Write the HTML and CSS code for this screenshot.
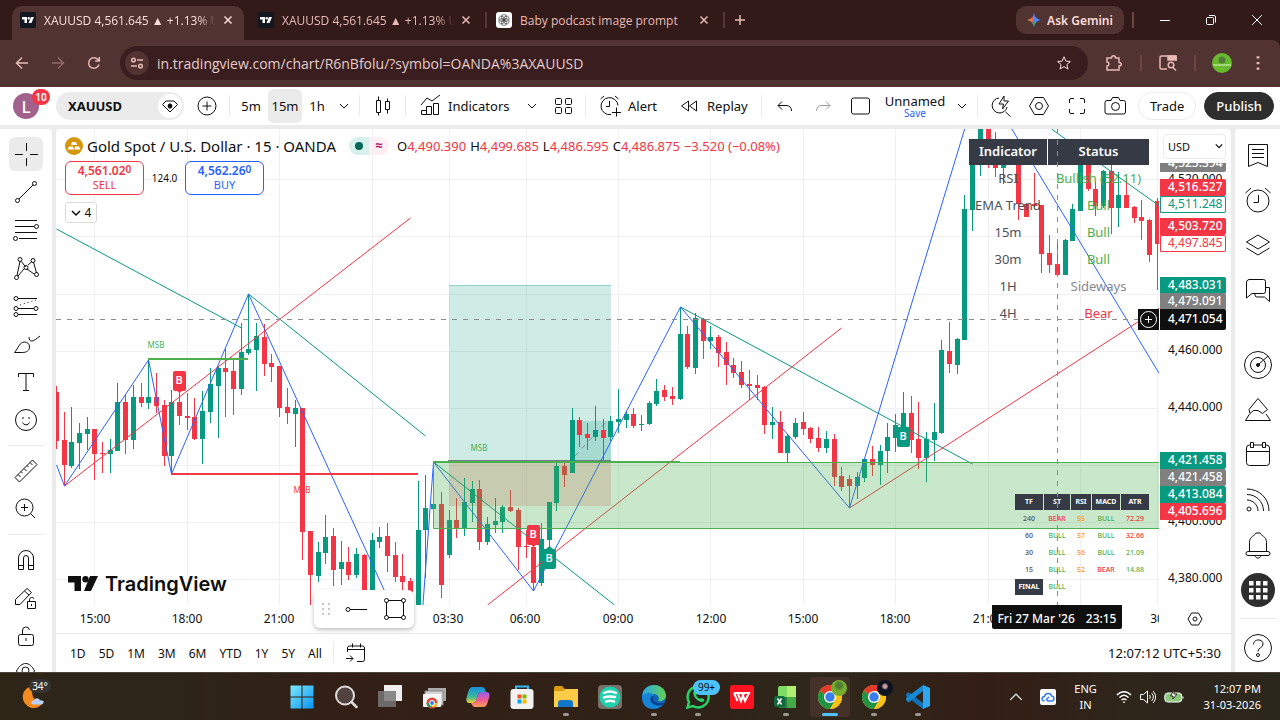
FILE: index.html
```html
<!DOCTYPE html>
<html lang="en">
<head>
    <meta charset="UTF-8">
    <meta name="viewport" content="width=device-width, initial-scale=1.0">
    <title>XAUUSD 4,561.645 ▲ +1.13% Unnamed</title>
    <link rel="stylesheet" href="styles.css">
</head>
<body>
    <!-- shared icons -->
    <svg class="defs" width="0" height="0">
        <symbol id="chevron" viewBox="0 0 10 10"><path d="M1 3l4 4 4-4"/></symbol>
        <symbol id="close" viewBox="0 0 10 10"><path d="M1.500 1.500l7 7M8.500 1.500l-7 7"/></symbol>
        <symbol id="tv" viewBox="0 0 16 16"><rect width="16" height="16" rx="2" fill="#131722"/><path d="M2 5h5v6H4.500V7.500H2zM11 5h3l-2.500 6H8.500z" fill="#fff"/><circle cx="8.800" cy="6.200" r="1.200" fill="#fff"/></symbol>
        <symbol id="chrome" viewBox="0 0 24 24">
            <circle cx="12" cy="12" r="12" fill="#fbc116"/>
            <path d="M12 12L1.600 6A12 12 0 0 1 22.400 6z" fill="#e33b2e"/>
            <path d="M12 12L1.600 6A12 12 0 0 0 12 24l5.200-9z" fill="#229342"/>
            <path d="M12 6h10.400A12 12 0 0 1 12 24l5.200-9z" fill="#fbc116"/>
            <circle cx="12" cy="12" r="6" fill="#fff"/><circle cx="12" cy="12" r="4.700" fill="#3b7ded"/>
        </symbol>
    </svg>

    <header class="browser">
        <div class="tab-strip">
            <div class="tab active">
                <svg class="favicon"><use href="#tv"/></svg>
                <span class="tab-title">XAUUSD 4,561.645 ▲ +1.13% Unnamed</span>
                <button class="tab-close" aria-label="Close tab"><svg><use href="#close"/></svg></button>
            </div>
            <div class="tab">
                <svg class="favicon"><use href="#tv"/></svg>
                <span class="tab-title">XAUUSD 4,561.645 ▲ +1.13% Unnamed</span>
                <button class="tab-close" aria-label="Close tab"><svg><use href="#close"/></svg></button>
            </div>
            <div class="tab divided">
                <svg class="favicon" viewBox="0 0 16 16"><rect width="16" height="16" rx="3" fill="#fff"/><g fill="none" stroke="#444" stroke-width=".7"><ellipse cx="8" cy="5.500" rx="2.600" ry="3"/><ellipse cx="8" cy="5.500" rx="2.600" ry="3" transform="rotate(60 8 8)"/><ellipse cx="8" cy="5.500" rx="2.600" ry="3" transform="rotate(120 8 8)"/><ellipse cx="8" cy="5.500" rx="2.600" ry="3" transform="rotate(180 8 8)"/><ellipse cx="8" cy="5.500" rx="2.600" ry="3" transform="rotate(240 8 8)"/><ellipse cx="8" cy="5.500" rx="2.600" ry="3" transform="rotate(300 8 8)"/></g></svg>
                <span class="tab-title">Baby podcast image prompt</span>
                <button class="tab-close" aria-label="Close tab"><svg><use href="#close"/></svg></button>
            </div>
            <button class="new-tab" aria-label="New tab"><svg viewBox="0 0 12 12"><path d="M6 1v10M1 6h10"/></svg></button>
            <div class="window-controls">
                <button class="gemini"><svg viewBox="0 0 14 14"><defs><linearGradient id="gem" x1="0" y1="0" x2="1" y2="0"><stop offset="0" stop-color="#f8c32d"/><stop offset=".4" stop-color="#e8575b"/><stop offset=".5" stop-color="#4b8bf5"/><stop offset="1" stop-color="#4285f4"/></linearGradient></defs><path d="M7 0c.6 4 3 6.400 7 7-4 .6-6.400 3-7 7-.6-4-3-6.400-7-7 4-.6 6.400-3 7-7z" fill="url(#gem)"/><path d="M4.500 9.400C6 10.300 6.700 12 7 14c.3-2 1-3.700 2.400-4.800z" fill="#2ea95b"/></svg>Ask Gemini</button>
                <span class="strip-sep"></span>
                <button class="win" aria-label="Minimize"><svg viewBox="0 0 12 12"><path d="M1 6.500h10"/></svg></button>
                <button class="win" aria-label="Restore"><svg viewBox="0 0 12 12"><rect x="1.500" y="3.500" width="7" height="7" rx="1"/><path d="M4 1.500h5a1.500 1.500 0 0 1 1.500 1.500v5.500"/></svg></button>
                <button class="win" aria-label="Close"><svg viewBox="0 0 12 12"><path d="M1 1l10 10M11 1L1 11"/></svg></button>
            </div>
        </div>
        <div class="address-row">
            <button class="nav" aria-label="Back"><svg viewBox="0 0 16 16"><path d="M14 8H3M8 2.500L2.500 8 8 13.500"/></svg></button>
            <button class="nav dim" aria-label="Forward"><svg viewBox="0 0 16 16"><path d="M2 8h11M8 2.500L13.500 8 8 13.500"/></svg></button>
            <button class="nav" aria-label="Reload"><svg viewBox="0 0 16 16"><path d="M13 9.500A5.300 5.300 0 1 1 12.300 5M13.300 2v4H9.200"/></svg></button>
            <div class="omnibox">
                <button class="site-info" aria-label="Site information"><svg viewBox="0 0 14 14"><circle cx="3.500" cy="4" r="1.800"/><path d="M7 4h6M1 10h6"/><circle cx="10.500" cy="10" r="1.800"/></svg></button>
                <input class="url" type="text" aria-label="Address" value="in.tradingview.com/chart/R6nBfolu/?symbol=OANDA%3AXAUUSD">
                <button class="star" aria-label="Bookmark"><svg viewBox="0 0 16 16"><path d="M8 1.800l1.800 4.300 4.600.4-3.500 3 1.100 4.600L8 11.600l-4 2.500 1.100-4.600-3.500-3 4.600-.4z"/></svg></button>
            </div>
            <div class="extensions">
                <button class="nav" aria-label="Extensions"><svg viewBox="0 0 18 18"><path d="M2 4h4.500c0-3 4-3 4 0H14v4.500c3 0 3 3.500 0 3.500v4H2v-4c2.500 0 2.500-4 0-4z"/></svg></button>
                <span class="strip-sep"></span>
                <button class="nav" aria-label="Search page"><svg viewBox="0 0 18 18"><path d="M8 15H2.500A1.500 1.500 0 0 1 1 13.500v-10A1.500 1.500 0 0 1 2.500 2h13A1.500 1.500 0 0 1 17 3.500V7"/><path d="M9 2h8v4H9z" fill="#e8b9b5"/><circle cx="12" cy="11" r="2.800"/><path d="M14 13.500l3 3"/></svg></button>
                <span class="strip-sep"></span>
                <button class="nav" aria-label="Profile"><svg class="profile" viewBox="0 0 20 20"><circle cx="10" cy="10" r="10" fill="#69b92d"/><circle cx="10" cy="7" r="3.500" fill="#527c3b"/><path d="M1 11h18v2H1z" fill="#a6d77c"/></svg></button>
                <button class="nav" aria-label="Menu"><svg viewBox="0 0 16 16"><path d="M8 2v2M8 7v2M8 12v2" stroke-width="2.500"/></svg></button>
            </div>
        </div>
    </header>

    <main class="app">
        <nav class="top-bar">
            <div class="account"><span class="avatar">L</span><span class="badge">10</span></div>
            <div class="symbol-pill">
                <button class="symbol">XAUUSD</button>
                <button class="gem" aria-label="Symbol details"><svg viewBox="0 0 18 18"><path d="M5 4h8l3.500 3.500L9 15 1.500 7.500z"/><path d="M9 6v6M6.500 9h5"/><path d="M7.500 7.500h3v3h-3z" fill="#0f0f0f"/></svg></button>
            </div>
            <button class="tool" aria-label="Compare"><svg viewBox="0 0 28 28"><circle cx="14" cy="14" r="9"/><path d="M14 9.500v9M9.500 14h9"/></svg></button>
            <span class="sep"></span>
            <button class="interval">5m</button>
            <button class="interval selected">15m</button>
            <button class="interval short">1h</button>
            <button class="drop" aria-label="More intervals"><svg><use href="#chevron"/></svg></button>
            <span class="sep"></span>
            <button class="tool" aria-label="Candles"><svg viewBox="0 0 28 28"><path d="M7.500 8.500h4v12h-4zM9.500 4.500v4M9.500 20.500v3M16.500 9.500h4v8h-4zM18.500 6.500v3M18.500 17.500v4"/></svg></button>
            <span class="sep"></span>
            <button class="tool labelled indicators"><svg viewBox="0 0 28 28"><path d="M5 13l6-7 5 3 8-6M5.500 18.500h5v4h-5zM10.500 14.500h5v8h-5zM17.500 11.500h5v11h-5z"/></svg>Indicators</button>
            <button class="drop" aria-label="Favourite indicators"><svg><use href="#chevron"/></svg></button>
            <button class="tool" aria-label="Templates"><svg viewBox="0 0 28 28"><rect x="6.500" y="6.500" width="6" height="6" rx="1"/><rect x="16.500" y="6.500" width="6" height="6" rx="1"/><rect x="6.500" y="15.500" width="6" height="6" rx="1"/><rect x="16.500" y="15.500" width="6" height="6" rx="1"/></svg></button>
            <span class="sep"></span>
            <button class="tool labelled alert"><svg viewBox="0 0 28 28"><path d="M22 13.500A8.500 8.500 0 1 0 15 22.500M13.500 9v5.500H10M4.500 7L8 4M19 4l3.500 3M20.500 15.500v9M16 20.500h9"/></svg>Alert</button>
            <button class="tool labelled replay"><svg viewBox="0 0 28 28"><path d="M13.500 9v10L6.500 14zM21.500 9v10L14.500 14z"/></svg>Replay</button>
            <span class="sep"></span>
            <button class="tool" aria-label="Undo"><svg viewBox="0 0 28 28"><path d="M11 9.500l-4 4 4 4M7 13.500h8c3.500 0 5.500 2 5.500 5.500"/></svg></button>
            <button class="tool faded" aria-label="Redo"><svg viewBox="0 0 28 28"><path d="M17 9.500l4 4-4 4M21 13.500h-8c-3.500 0-5.500 2-5.500 5.500"/></svg></button>
            <button class="tool" aria-label="Layout"><svg viewBox="0 0 28 28"><rect x="4.500" y="6" width="18" height="16" rx="2"/></svg></button>
            <button class="layout-name"><span>Unnamed</span><small>Save</small></button>
            <button class="drop" aria-label="Manage layouts"><svg><use href="#chevron"/></svg></button>
            <span class="sep"></span>
            <button class="tool" aria-label="Quick search"><svg viewBox="0 0 28 28"><path d="M12 6a7.500 7.500 0 1 0 8 9M18.500 20l5 4.500M17 4l-5 8h4.500l-1 5 6-8H17z"/></svg></button>
            <button class="tool" aria-label="Settings"><svg viewBox="0 0 28 28"><path d="M9.500 5.500h9l5 8.500-5 8.500h-9l-5-8.500z"/><circle cx="14" cy="14" r="3.500"/></svg></button>
            <button class="tool" aria-label="Fullscreen"><svg viewBox="0 0 28 28"><path d="M6.500 11V8a1.500 1.500 0 0 1 1.500-1.500h3M17 6.500h3A1.500 1.500 0 0 1 21.500 8v3M21.500 17v3a1.500 1.500 0 0 1-1.500 1.500h-3M11 21.500H8A1.500 1.500 0 0 1 6.500 20v-3"/></svg></button>
            <button class="tool" aria-label="Snapshot"><svg viewBox="0 0 28 28"><path d="M6 8.500h4l1.500-3h6l1.500 3h3.500a2 2 0 0 1 2 2V20a2 2 0 0 1-2 2H6a2 2 0 0 1-2-2v-9.500a2 2 0 0 1 2-2z"/><circle cx="14.500" cy="14.500" r="4"/></svg></button>
            <div class="actions">
                <button class="trade">Trade</button>
                <button class="publish">Publish</button>
            </div>
        </nav>

        <div class="workspace">
            <aside class="draw-bar">
                <button class="draw selected" aria-label="Cross"><svg viewBox="0 0 28 28"><path d="M14.500 3v8M14.500 18v8M3 14.500h8M18 14.500h8"/></svg></button>
                <button class="draw" aria-label="Trend line"><svg viewBox="0 0 28 28"><path d="M7 21L21 7"/><circle cx="5.500" cy="22.500" r="2"/><circle cx="22.500" cy="5.500" r="2"/></svg></button>
                <button class="draw" aria-label="Fib retracement"><svg viewBox="0 0 28 28"><path d="M3 4.500h22M3 10.500h19M3 16.500h22M7 22.500h18"/><circle cx="24.500" cy="10.500" r="2"/><circle cx="3.500" cy="22.500" r="2"/></svg></button>
                <button class="draw" aria-label="Pattern"><svg viewBox="0 0 28 28"><path d="M5 21.500L8 7.500M9.500 7.500l4 5.500M16 11l4-3.500M21.500 8l3 11M22 20l-7-5M12 15l-6 7"/><circle cx="4.500" cy="23.500" r="2"/><circle cx="8" cy="5.500" r="2"/><circle cx="14" cy="13.500" r="2"/><circle cx="21" cy="6.500" r="2"/><circle cx="24.500" cy="20.500" r="2"/></svg></button>
                <button class="draw" aria-label="Forecast"><svg viewBox="0 0 28 28"><path d="M6 6.500h19M6 16.500h16M6 22.500h19"/><path d="M8 13l16-5" stroke-dasharray="1 3"/><circle cx="4" cy="6.500" r="2"/><circle cx="4" cy="16.500" r="2"/><circle cx="24" cy="16.500" r="2"/><circle cx="4" cy="22.500" r="2"/></svg></button>
                <button class="draw" aria-label="Brush"><svg viewBox="0 0 28 28"><path d="M2.500 22.500h8c4 0 7-2 7-5.500s-2.500-5-5-5c-5 0-6 6-10 10.500zM17 7c0 3 1 4 3 4s4-2 8-5"/></svg></button>
                <button class="draw" aria-label="Text"><svg viewBox="0 0 28 28"><path d="M6.500 9V5.500h15V9M14 5.500v17M11 22.500h6"/></svg></button>
                <button class="draw" aria-label="Emoji"><svg viewBox="0 0 28 28"><circle cx="14" cy="14" r="10.500"/><path d="M11 11v2M17 11v2M10.500 16.500c1.500 3 5.500 3 7 0"/></svg></button>
                <hr>
                <button class="draw" aria-label="Measure"><svg viewBox="0 0 28 28"><path d="M3 20.500L20.500 3l4.500 4.500L7.500 25zM6 17.500l2.500 2.500M9 14.500l1.500 1.500M12 11.500l2.500 2.500M15 8.500l1.500 1.500M18 5.500L20.500 8"/></svg></button>
                <button class="draw" aria-label="Zoom in"><svg viewBox="0 0 28 28"><circle cx="12.500" cy="12.500" r="8.500"/><path d="M12.500 9v7M9 12.500h7M18.500 18.500l4.500 4.500"/></svg></button>
                <hr>
                <button class="draw" aria-label="Magnet"><svg viewBox="0 0 28 28"><path d="M6.500 23.500V12a7.500 7.500 0 0 1 15 0v11.500h-5V12a2.500 2.500 0 0 0-5 0v11.500zM6.500 19.500h5M16.500 19.500h5"/></svg></button>
                <button class="draw" aria-label="Keep drawing"><svg viewBox="0 0 28 28"><path d="M3.500 20.500v-5L15 4.500l4.500 4L8 20.500zM12.500 7l4.500 4M15.500 17.500h8v7h-8zM17.500 17.500v-2a2.500 2.500 0 0 1 4.500-1M19.500 20v2"/></svg></button>
                <button class="draw" aria-label="Lock"><svg viewBox="0 0 28 28"><rect x="6.500" y="12.500" width="15" height="11" rx="2"/><path d="M10.500 12.500V9A3.500 3.500 0 0 1 17.500 8M14 16v3"/></svg></button>
                <button class="draw" aria-label="Hide drawings"><svg viewBox="0 0 28 28"><path d="M4.500 11c5-10 13.500-10 18 0-4.500 8-13.500 8-18 0z"/><circle cx="13.500" cy="10.500" r="3.500"/></svg></button>
            </aside>

            <section class="chart-panel">
                <div class="chart-grid">
                    <div class="canvas">
                        <svg class="plot" id="plot"></svg>
                        <div class="legend">
                            <div class="legend-line">
                                <svg class="gold" viewBox="0 0 18 18"><circle cx="9" cy="9" r="9" fill="#d6960a"/><path d="M7 5h4l1 3H6zM4 9.500h4l1 3H2.500zM10 9.500h4l1.500 3H9.500z" fill="#fff"/></svg>
                                <h1>Gold Spot / U.S. Dollar · 15 · OANDA</h1>
                                <span class="market"><i class="open"></i><b>≈</b></span>
                                <p class="ohlc"><span>O<em>4,490.390</em></span><span>H<em>4,499.685</em></span><span>L<em>4,486.595</em></span><span>C<em>4,486.875</em></span><em>−3.520 (−0.08%)</em></p>
                            </div>
                            <div class="quotes">
                                <button class="quote sell"><b>4,561.02<sup>0</sup></b>SELL</button>
                                <span class="spread">124.0</span>
                                <button class="quote buy"><b>4,562.26<sup>0</sup></b>BUY</button>
                            </div>
                            <button class="collapse"><svg><use href="#chevron"/></svg>4</button>
                        </div>
                        <div class="brand"><svg viewBox="0 0 30 16"><path d="M0 0h13v15H6.500V6.500H0zM22 0h8l-7 15h-7z"/><circle cx="17.500" cy="3.200" r="3.200"/></svg>TradingView</div>
                        <table class="status">
                            <thead><tr><th>Indicator</th><th>Status</th></tr></thead>
                            <tbody>
                                <tr><td>RSI</td><td class="up">Bullish (52.11)</td></tr>
                                <tr><td>EMA Trend</td><td class="up">Bull</td></tr>
                                <tr><td>15m</td><td class="up">Bull</td></tr>
                                <tr><td>30m</td><td class="up">Bull</td></tr>
                                <tr><td>1H</td><td class="flat">Sideways</td></tr>
                                <tr><td>4H</td><td class="down">Bear</td></tr>
                            </tbody>
                        </table>
                        <table class="matrix">
                            <thead><tr><th>TF</th><th>ST</th><th>RSI</th><th>MACD</th><th>ATR</th></tr></thead>
                            <tbody>
                                <tr><td>240</td><td class="down">BEAR</td><td class="mid">55</td><td class="up">BULL</td><td class="down">72.29</td></tr>
                                <tr><td>60</td><td class="up">BULL</td><td class="mid">57</td><td class="up">BULL</td><td class="down">32.66</td></tr>
                                <tr><td>30</td><td class="up">BULL</td><td class="mid">56</td><td class="up">BULL</td><td class="up">21.09</td></tr>
                                <tr><td>15</td><td class="up">BULL</td><td class="mid">52</td><td class="down">BEAR</td><td class="up">14.88</td></tr>
                                <tr><th>FINAL</th><td class="up">BULL</td><td></td><td></td><td></td></tr>
                            </tbody>
                        </table>
                        <svg class="plot cross" id="cross"></svg>
                        <button class="add-order" aria-label="Add order"><svg viewBox="0 0 21 21"><circle cx="10.500" cy="10.500" r="8"/><path d="M10.500 7v7M7 10.500h7"/></svg></button>
                    </div>
                    <div class="price-axis">
                        <select class="currency" aria-label="Currency"><option>USD</option></select>
                        <svg class="currency-arrow"><use href="#chevron"/></svg>
                        <div class="prices" id="prices"></div>
                    </div>
                    <div class="time-axis" id="times"></div>
                    <div class="axis-corner"><button aria-label="Axis settings"><svg viewBox="0 0 16 16"><path d="M4.500 2h7L15 8l-3.500 6h-7L1 8z"/><circle cx="8" cy="8" r="2"/></svg></button></div>
                    <div class="cross-time"><span>Fri 27 Mar '26</span><span>23:15</span></div>
                    <div class="favorites">
                        <svg class="grip" viewBox="0 0 10 14"><path d="M1 1h2v2H1zM7 1h2v2H7zM1 6h2v2H1zM7 6h2v2H7zM1 11h2v2H1zM7 11h2v2H7z"/></svg>
                        <button aria-label="Horizontal ray"><svg viewBox="0 0 28 28"><circle cx="6" cy="14.500" r="2"/><path d="M8 14.500h17"/></svg></button>
                        <button aria-label="Rectangle"><svg viewBox="0 0 28 28"><path d="M7 5.500h14M7 22.500h14M5.500 7v14M22.500 7v14"/><circle cx="5.500" cy="5.500" r="2"/><circle cx="22.500" cy="5.500" r="2"/><circle cx="5.500" cy="22.500" r="2"/><circle cx="22.500" cy="22.500" r="2"/></svg></button>
                    </div>
                </div>
                <footer class="range-bar">
                    <button>1D</button><button>5D</button><button>1M</button><button>3M</button><button>6M</button><button>YTD</button><button>1Y</button><button>5Y</button><button>All</button>
                    <span class="sep"></span>
                    <button class="goto" aria-label="Go to date"><svg viewBox="0 0 28 28"><path d="M5.500 13V9a2 2 0 0 1 2-2h13a2 2 0 0 1 2 2v11.500a2 2 0 0 1-2 2H15M5.500 10.500h17M10.500 4.500v4M18.500 4.500v4M4 19.500h7M8 16.500l3 3-3 3"/></svg></button>
                    <button class="clock">12:07:12 UTC+5:30</button>
                </footer>
            </section>

            <aside class="side-bar">
                <button aria-label="Watchlist"><svg viewBox="0 0 28 28"><path d="M4.500 3.500h19v22L14 21.500l-9.500 4zM8 8.500h12M8 12.500h12M8 16.500h12"/></svg></button>
                <button aria-label="Alerts"><svg viewBox="0 0 28 28"><circle cx="14" cy="15" r="11"/><path d="M14.500 9v7.500h-5M1.500 7L7 2M21 2l5.500 5"/></svg></button>
                <button aria-label="Object tree"><svg viewBox="0 0 28 28"><path d="M14 4l11.500 7L14 18 2.500 11zM2.500 17L14 24l11.500-7"/></svg></button>
                <button aria-label="Chats"><svg viewBox="0 0 28 28"><path d="M4.500 3.500h15a2 2 0 0 1 2 2v10a2 2 0 0 1-2 2H8l-5.500 4.500v-16a2 2 0 0 1 2-2zM21.500 11.500h4v14l-5-4.500H13a2 2 0 0 1-2-2v-1.500"/></svg></button>
                <button class="lower" aria-label="Screeners"><svg viewBox="0 0 28 28"><circle cx="14" cy="14" r="13.500"/><circle cx="14" cy="14" r="7.500"/><circle cx="14" cy="14" r="1.500" fill="#131722"/><path d="M14 14L24 5"/></svg></button>
                <button aria-label="Pine editor"><svg viewBox="0 0 28 28"><path d="M14 2.500l9.500 11-5 4-4.500-3H9.500l-3.500 3-1-4zM5.500 18l-4 6.500h25L22 18"/></svg></button>
                <button aria-label="Calendar"><svg viewBox="0 0 28 28"><rect x="2.500" y="4" width="23" height="20.500" rx="3"/><path d="M2.500 10.500h23"/><path d="M6.500 1.500h3v5h-3zM18.500 1.500h3v5h-3z" fill="#fff"/></svg></button>
                <button aria-label="News"><svg viewBox="0 0 28 28"><circle cx="5" cy="23" r="2"/><path d="M3 14c6 0 11 5 11 11M3 8.500c9 0 16.500 7 16.500 16.500M3 3c12 0 22 9 22 22"/></svg></button>
                <button aria-label="Notifications"><svg viewBox="0 0 28 28"><path d="M5.500 20V11.500C5.500 5 11 5 12 2h4c1 3 6.500 3 6.500 9.500V20M4 20.500h20a2 2 0 0 1 0 4H4a2 2 0 0 1 0-4zM11 24.500c1 3.500 5 3.500 6 0"/></svg></button>
                <button class="products" aria-label="Products"><svg viewBox="0 0 34 34"><circle cx="17" cy="17" r="17" fill="#2e2e2e"/><path d="M8 8h4.500v4.500H8zM15 8h4.500v4.500H15zM22 8h4.500v4.500H22zM8 15h4.500v4.500H8zM15 15h4.500v4.500H15zM22 15h4.500v4.500H22zM8 22h4.500v4.500H8zM15 22h4.500v4.500H15zM22 22h4.500v4.500H22z" fill="#fff"/></svg></button>
                <hr>
                <button aria-label="Help"><svg viewBox="0 0 28 28"><circle cx="14" cy="14" r="13.500"/><path d="M9.500 10.500c0-6 9.500-6 9.500-.5 0 4-5 3.500-5 7.500"/><circle cx="14" cy="21" r="1.500"/></svg></button>
            </aside>
        </div>
    </main>

    <footer class="taskbar">
        <button class="weather"><svg viewBox="0 0 24 24"><path d="M12 1a11 11 0 1 0 10 15C13 18 7 11 12 1z" fill="#f58b1f"/><path d="M12 15.500c1-3 5-3 6 0 4-1 5 4 1 4h-7c-4 0-4-4 0-4z" fill="#b9d0f5"/></svg><span>34°</span></button>
        <div class="apps">
            <button aria-label="Start"><svg viewBox="0 0 24 24"><defs><linearGradient id="win" x1="0" y1="0" x2="1" y2="1"><stop offset="0" stop-color="#7be8fb"/><stop offset="1" stop-color="#0a95f5"/></linearGradient></defs><path d="M.5.500h11v11H.5zM12.500.5h11v11h-11zM.5 12.500h11v11H.5zM12.500 12.500h11v11h-11z" fill="url(#win)"/></svg></button>
            <button aria-label="Search"><svg viewBox="0 0 24 24"><circle cx="11" cy="10.500" r="9" fill="#534340" stroke="#ddd" stroke-width="2"/><path d="M17.500 17l5 5" stroke="#ddd" stroke-width="2.500" stroke-linecap="round"/></svg></button>
            <button aria-label="Task view"><svg viewBox="0 0 24 24"><path d="M6 0h18v16H6z" fill="#eee"/><path d="M0 6h18v16H0z" fill="#777" opacity=".85"/></svg></button>
            <button aria-label="Snipping"><svg viewBox="0 0 24 24"><path d="M6 3h18v13H6z" fill="#aaa"/><path d="M3 6h18v14H3z" fill="#d5d5d5" stroke="#888"/><path d="M1 9h18v13H1z" fill="#f5f5f5"/><circle cx="10" cy="18" r="5.500" fill="#e2473b"/><path d="M10 18H4.500a5 5 0 0 0 2 4h3z" fill="#2b9f4b"/><path d="M10 18h5.500a5 5 0 0 1-2 4H10z" fill="#fbc116"/><circle cx="10" cy="18" r="2.500" fill="#3b7ded" stroke="#fff"/></svg></button>
            <button aria-label="Copilot"><svg viewBox="0 0 24 24"><defs><linearGradient id="cop" x1="0" y1="0" x2="0" y2="1"><stop offset="0" stop-color="#198fe0"/><stop offset=".6" stop-color="#36b89b"/><stop offset="1" stop-color="#f4cd33"/></linearGradient><linearGradient id="cop2" x1="0" y1="0" x2="0" y2="1"><stop offset="0" stop-color="#8f62ef"/><stop offset=".5" stop-color="#ef5899"/><stop offset="1" stop-color="#ff9f52"/></linearGradient></defs><path d="M7 2h9c3 0 3 3 4 5h-5c-2 0-3 2-4 6s-2 5-5 5H3c-3 0-3-4-2-7C3 5 3 2 7 2z" fill="url(#cop)"/><path d="M17 22H9c-2 0-3-2-4-4 4 0 5-1 6-5s2-6 5-6h4c4 0 4 3 3 6-2 6-2 9-6 9z" fill="url(#cop2)"/></svg></button>
            <button aria-label="Store"><svg viewBox="0 0 24 24"><path d="M6 6V1.500h12V6" fill="none" stroke="#36b7ef" stroke-width="2"/><rect x=".5" y="4" width="23" height="20" rx="3" fill="#f2f2f2"/><path d="M7.500 9.500h4v4h-4z" fill="#f25022"/><path d="M12.500 9.500h4v4h-4z" fill="#7fba00"/><path d="M7.500 14.500h4v4h-4z" fill="#00a4ef"/><path d="M12.500 14.500h4v4h-4z" fill="#ffb900"/></svg></button>
            <button class="running" aria-label="Files"><svg viewBox="0 0 24 24"><path d="M0 3a2 2 0 0 1 2-2h6l3 3h11a2 2 0 0 1 2 2v5H0z" fill="#d99a0f"/><path d="M0 6h9l3-2h12v18H0z" fill="#fccc48"/><path d="M4 22v-4a3 3 0 0 1 3-3h9a3 3 0 0 1 3 3v4z" fill="#1377c9"/></svg></button>
            <button aria-label="Music"><svg viewBox="0 0 24 24"><rect width="24" height="24" rx="4" fill="#77716a"/><circle cx="12" cy="12" r="10.500" fill="#1fcfae"/><path d="M6 8c4-2 8-2 12 0M6 12.500c4-1.500 7-1.500 11-.5M8 16.500c3-1 5-1 8 0" stroke="#fff" stroke-width="2.500" fill="none" stroke-linecap="round"/></svg></button>
            <button class="running" aria-label="Edge"><svg viewBox="0 0 24 24"><defs><linearGradient id="edge" x1="0" y1="0" x2="1" y2="0"><stop offset="0" stop-color="#2aa6e4"/><stop offset="1" stop-color="#63d353"/></linearGradient></defs><circle cx="12" cy="12" r="12" fill="#0f62b5"/><path d="M.5 9C3-3 22-3 24 10c0 5-4 7-8 6 2-3 0-7-5-7-4 0-7 1-10.500 4z" fill="url(#edge)"/><path d="M0 12c2-5 11-5 12-1-5 2-3 9 9 8-4 7-21 8-21-7z" fill="#1583d6"/><path d="M12 11c-3 3 0 9 10 7l-1 1.500c-6 3-15-1-12-8z" fill="#07408a"/></svg></button>
            <button class="running" aria-label="WhatsApp"><svg viewBox="0 0 24 24"><path d="M1.500 22.500L3 17a10.500 10.500 0 1 1 4 4z" fill="#2c221a" stroke="#25d366" stroke-width="2.500"/><path d="M8 6c-3 3 3 11 8 11 2 0 3-2 2-3l-3-1-1 1c-2-1-3-2-4-4l1-1-1-3z" fill="#25d366"/></svg><span class="count">99+</span></button>
            <button aria-label="WPS"><svg viewBox="0 0 24 24"><rect width="24" height="24" rx="3" fill="#ff1320"/><path d="M4 8h8l3 8 4-8h-5l-3 8-3.500-8M4 8l3.500 8" fill="none" stroke="#fff" stroke-width="2"/></svg></button>
            <button class="running" aria-label="Excel"><svg viewBox="0 0 24 24"><path d="M4 3a2 2 0 0 1 2-2h8v11H4z" fill="#7edb65"/><path d="M13 1h9v11h-9z" fill="#b0ed72"/><path d="M4 12h18v11H6a2 2 0 0 1-2-2z" fill="#237f3d"/><path d="M13 12h9v11h-9z" fill="#45a947"/><rect y="11" width="11" height="11" rx="2" fill="#10693a"/><path d="M3.500 13.500l4 6M7.500 13.500l-4 6" stroke="#fff" stroke-width="1.500"/></svg></button>
            <button class="focused" aria-label="Chrome"><svg><use href="#chrome"/></svg><i class="who green"></i></button>
            <button class="running" aria-label="Chrome profile"><svg><use href="#chrome"/></svg><i class="who"></i></button>
            <button class="running" aria-label="Code"><svg viewBox="0 0 24 24"><path d="M0 9l2.500-2L17 18v6L0 11z" fill="#1071b8"/><path d="M0 15l2.500 2.500L17 6V0L0 13z" fill="#168bd5"/><path d="M17 0l7 3v18l-7 3z" fill="#2da7ef"/></svg></button>
        </div>
        <div class="tray">
            <button aria-label="Hidden icons"><svg viewBox="0 0 14 14"><path d="M2 9.500l5-5 5 5"/></svg></button>
            <button aria-label="Cloud"><svg viewBox="0 0 16 16"><rect width="16" height="16" rx="2" fill="#fff" stroke="none"/><path d="M4.500 12C1 12 1.500 7.500 4.500 7.500 5 3.500 11 3.500 11.500 7c3.500 0 3 5 0 5H8L6.500 10.500 9 8" stroke="#367ded" stroke-width="1.500"/></svg></button>
            <button class="lang">ENG<br>IN</button>
            <button aria-label="Network"><svg viewBox="0 0 16 16"><path d="M1 6c4-4.500 10-4.500 14 0M3.500 8.500c3-3 6-3 9 0M5.500 11c2-1.500 3-1.500 5 0M8 12.500v1.500" stroke-width="1.500"/></svg></button>
            <button aria-label="Volume"><svg viewBox="0 0 16 16"><path d="M.5 5.500h3l4-3.500v12l-4-3.500h-3zM9.500 6c1 1.500 1 3 0 4M11.500 4c2.500 2.500 2.500 5.500 0 8M13 2c3.500 4 3.500 8 0 12"/></svg></button>
            <button class="battery" aria-label="Battery"><svg viewBox="0 0 20 14"><rect x=".8" y="3" width="17" height="9" rx="3" fill="#8cc97c"/><path d="M19 6.500v2"/><path d="M10 0L6.500 6H9v3l4-5h-3z" fill="#fff" stroke="#30291a"/></svg></button>
            <button class="date">12:07 PM<br>31-03-2026</button>
        </div>
    </footer>
    <script src="chart.js"></script>
</body>
</html>
```

FILE: styles.css
```css
* {
    box-sizing: border-box;
}

body {
    margin: 0;
    height: 100vh;
    overflow: hidden;
    display: flex;
    flex-direction: column;
    font-family: "Noto Sans", "Open Sans", sans-serif;
    font-size: 13px;
    color: #0f0f0f;
    background: #ebebeb;
}

button,
input,
select {
    font: inherit;
    color: inherit;
    background: none;
    border: none;
    padding: 0;
    margin: 0;
    cursor: pointer;
}

button {
    display: flex;
    align-items: center;
    justify-content: center;
    white-space: nowrap;
}

svg {
    fill: none;
    stroke: currentColor;
    flex: none;
}

.defs {
    position: absolute;
}

/* browser frame */
.browser {
    background: #321a18;
    color: #e8b9b5;
    flex: none;
}

.tab-strip {
    display: flex;
    align-items: center;
    height: 40px;
    padding-left: 12px;
}

.tab {
    display: flex;
    align-items: center;
    width: 238px;
    height: 34px;
    margin-top: 6px;
    padding: 0 14px 6px 8px;
    font-family: "Open Sans", sans-serif;
    font-size: 12px;
    position: relative;
}

.tab.active {
    background: #513331;
    color: #fadcd9;
    width: 232px;
    margin-right: 6px;
    padding-right: 8px;
    border-radius: 10px 10px 0 0;
}

.tab.divided::before,
.tab.divided::after {
    content: "";
    position: absolute;
    left: -3px;
    top: 6px;
    width: 2px;
    height: 16px;
    background: #553735;
}

.tab.divided::after {
    left: 235px;
}

.favicon {
    width: 16px;
    height: 16px;
    margin-right: 8px;
    stroke: none;
}

.tab-title {
    flex: 1;
    overflow: hidden;
    white-space: nowrap;
    -webkit-mask-image: linear-gradient(to right, #000 90%, transparent);
    mask-image: linear-gradient(to right, #000 90%, transparent);
}

.divided .tab-title {
    -webkit-mask-image: none;
    mask-image: none;
}

.tab-close {
    width: 16px;
    height: 16px;
    margin-left: 4px;
}

.tab-close svg {
    width: 10px;
    height: 10px;
    stroke-width: 1.5;
}

.new-tab {
    width: 28px;
    height: 28px;
}

.new-tab svg {
    width: 12px;
    stroke-width: 1.5;
}

.window-controls {
    display: flex;
    align-items: center;
    margin-left: auto;
}

.gemini {
    gap: 6px;
    width: 108px;
    height: 28px;
    border-radius: 10px;
    background: #513331;
    color: #fadcd9;
    font-weight: 600;
    font-size: 12px;
}

.gemini svg {
    width: 14px;
    stroke: none;
}

.strip-sep {
    width: 2px;
    height: 16px;
    margin: 0 8px;
    background: #6a4643;
}

.win {
    width: 46px;
    height: 40px;
    color: #fff;
}

.win svg {
    width: 12px;
}

.address-row {
    display: flex;
    align-items: center;
    height: 47px;
    padding: 0 4px 1px;
    background: #513331;
    border-top-right-radius: 8px;
}

.nav {
    width: 36px;
    height: 34px;
}

.nav svg {
    width: 16px;
    height: 16px;
    stroke-width: 1.5;
}

.nav.dim {
    color: #906a67;
}

.nav .profile {
    width: 20px;
    height: 20px;
    stroke: none;
}

.omnibox {
    flex: 1;
    display: flex;
    align-items: center;
    height: 34px;
    margin-left: 8px;
    padding: 0 16px 0 5px;
    border-radius: 17px;
    background: #3a1e1f;
}

.site-info {
    width: 24px;
    height: 24px;
    border-radius: 50%;
    background: #513331;
}

.site-info svg {
    width: 14px;
    stroke-width: 1.5;
}

.url {
    flex: 1;
    padding-left: 8px;
    color: #e4cbc9;
    font-family: "Open Sans", sans-serif;
    font-size: 14px;
}

.star svg {
    width: 16px;
    stroke: #fadcd9;
}

.extensions {
    display: flex;
    align-items: center;
    margin-left: 8px;
}

.extensions .nav svg:not(.profile) {
    width: 18px;
    height: 18px;
}

/* top toolbar */
.app {
    flex: 1;
    min-height: 0;
    display: flex;
    flex-direction: column;
    gap: 4px;
}

.top-bar {
    display: flex;
    align-items: center;
    flex: none;
    height: 38px;
    padding-right: 6px;
    background: #fff;
    font-size: 13px;
}

.account {
    position: relative;
    width: 56px;
    padding-left: 13px;
}

.avatar {
    display: flex;
    align-items: center;
    justify-content: center;
    width: 26px;
    height: 26px;
    border-radius: 50%;
    background: #a1618c;
    color: #fff;
    font-size: 17px;
    font-weight: 500;
}

.badge {
    position: absolute;
    left: 32px;
    top: -4px;
    width: 18px;
    height: 16px;
    border-radius: 8px;
    background: #f23645;
    color: #fff;
    font-size: 10px;
    font-weight: 600;
    line-height: 16px;
    text-align: center;
}

.symbol-pill {
    display: flex;
    align-items: center;
    justify-content: space-between;
    width: 128px;
    height: 28px;
    margin-right: 4px;
    padding: 0 2px 0 12px;
    border-radius: 14px;
    background: #ebebeb;
}

.symbol {
    font-weight: 700;
}

.gem {
    width: 24px;
    height: 24px;
    border-radius: 50%;
    background: #fff;
}

.gem svg {
    width: 18px;
}

.tool {
    width: 38px;
    height: 34px;
    border-radius: 6px;
}

.tool svg {
    width: 28px;
    height: 28px;
}

.tool.faded {
    color: #9c9c9c;
}

.labelled {
    justify-content: flex-start;
    gap: 4px;
    padding-left: 6px;
}

.indicators {
    width: 110px;
}

.alert {
    width: 79px;
}

.replay {
    width: 89px;
}

.interval {
    width: 34px;
    height: 34px;
    border-radius: 6px;
}

.interval.short {
    width: 30px;
}

.interval.selected {
    background: #ebebeb;
}

.drop {
    width: 24px;
    height: 34px;
}

.drop svg {
    width: 10px;
    height: 10px;
}

.sep {
    width: 1px;
    height: 22px;
    margin: 0 4px 0 3px;
    background: #ebebeb;
}

.layout-name {
    flex-direction: column;
    width: 70px;
    line-height: 14px;
}

.layout-name small {
    font-size: 10px;
    line-height: 11px;
    color: #2962ff;
}

.actions {
    display: flex;
    gap: 8px;
    margin-left: auto;
}

.trade,
.publish {
    height: 28px;
    padding: 0 11px;
    border-radius: 14px;
    border: 1px solid #ebebeb;
}

.publish {
    background: #2e2e2e;
    border-color: #2e2e2e;
    color: #fff;
    font-weight: 500;
}

/* workspace */
.workspace {
    flex: 1;
    min-height: 0;
    display: grid;
    grid-template-columns: 52px 1fr 45px;
    gap: 4px;
}

.draw-bar,
.side-bar {
    background: #fff;
    display: flex;
    flex-direction: column;
    align-items: center;
    overflow: hidden;
}

.draw-bar {
    border-top-right-radius: 4px;
    padding-top: 6px;
}

.draw {
    flex: none;
    width: 34px;
    height: 34px;
    margin: 2px 0;
    border-radius: 6px;
}

.draw.selected {
    background: #ebebeb;
}

.draw svg,
.side-bar svg {
    width: 28px;
    height: 28px;
}

hr {
    flex: none;
    width: 36px;
    height: 1px;
    margin: 6px 0;
    border: none;
    background: #ebebeb;
}

.side-bar {
    border-top-left-radius: 4px;
    padding-top: 3px;
}

.side-bar button {
    flex: none;
    height: 45px;
}

.side-bar .lower {
    margin-top: 30px;
}

.side-bar .products svg {
    width: 34px;
    height: 34px;
    stroke: none;
}

.chart-panel {
    min-width: 0;
    display: flex;
    flex-direction: column;
    background: #fff;
    border-radius: 4px 4px 0 0;
}

.chart-grid {
    position: relative;
    flex: 1;
    min-height: 0;
    display: grid;
    grid-template-columns: 1fr 72px;
    grid-template-rows: 1fr 28px;
}

.canvas {
    position: relative;
    overflow: hidden;
}

.plot {
    position: absolute;
    top: 0;
    left: 0;
    width: 100%;
    height: 100%;
    stroke: none;
}

.plot .grid {
    stroke: #f0f0f0;
    shape-rendering: crispEdges;
}

.plot .candles {
    shape-rendering: crispEdges;
}

.plot .ray {
    fill: none;
    stroke-width: 1;
}

.plot text {
    font-size: 8px;
    text-anchor: middle;
}

.plot .mark {
    font-size: 11px;
    font-weight: 600;
    fill: #fff;
}

.cross {
    pointer-events: none;
}

.cross line {
    stroke: #8c8c8c;
    stroke-dasharray: 5 6;
}

/* legend */
.legend {
    position: relative;
    padding: 7px 9px;
}

.legend-line {
    display: flex;
    align-items: center;
    height: 19px;
}

.gold {
    width: 18px;
    height: 18px;
    margin-right: 4px;
    stroke: none;
}

h1 {
    margin: 0 13px 0 0;
    font-size: 15px;
    font-weight: 400;
    white-space: nowrap;
}

.market {
    display: flex;
    width: 40px;
    height: 18px;
    margin-right: 8px;
    border-radius: 9px;
    overflow: hidden;
    background: #feeff5;
}

.market b {
    width: 20px;
    color: #b0195f;
    line-height: 17px;
    text-align: center;
}

.open {
    width: 20px;
    background: #d8f0ec;
    display: flex;
    align-items: center;
    justify-content: center;
}

.open::before {
    content: "";
    width: 8px;
    height: 8px;
    border-radius: 50%;
    background: #056656;
}

.ohlc {
    display: flex;
    gap: 4px;
    margin: 0;
    font-size: 13px;
    white-space: nowrap;
}

.ohlc em {
    font-style: normal;
    color: #f23645;
}

.quotes {
    display: flex;
    align-items: center;
    margin-top: 6px;
}

.quote {
    flex-direction: column;
    width: 79px;
    height: 34px;
    border: 1px solid #f23645;
    border-radius: 6px;
    background: #fff;
    color: #f23645;
    font-size: 11px;
    line-height: 14px;
}

.quote b {
    font-size: 12px;
    font-weight: 600;
    line-height: 14px;
}

.quote sup {
    font-size: 10px;
    line-height: 1px;
    vertical-align: 2px;
}

.quote.buy {
    border-color: #2962ff;
    color: #2962ff;
}

.spread {
    width: 41px;
    font-size: 10px;
    text-align: center;
}

.collapse {
    gap: 4px;
    width: 32px;
    height: 21px;
    margin-top: 7px;
    border: 1px solid #dbdbdb;
    border-radius: 3px;
    background: #fff;
    font-size: 12px;
}

.collapse svg {
    width: 10px;
    height: 10px;
    stroke-width: 1.5;
}

.brand {
    position: absolute;
    left: 12px;
    bottom: 9px;
    display: flex;
    align-items: center;
    gap: 7px;
    font-family: Inter, sans-serif;
    font-size: 20px;
    font-weight: 600;
    line-height: 24px;
}

.brand svg {
    width: 30px;
    height: 16px;
    fill: #0f0f0f;
    stroke: none;
}

/* indicator tables */
.status,
.matrix {
    position: absolute;
    right: 9px;
    border-collapse: separate;
    border-spacing: 1px 0;
    text-align: center;
    color: #4c505b;
    table-layout: fixed;
}

.status th,
.matrix th {
    background: #363a45;
    color: #fff;
    font-weight: 600;
}

.status {
    top: 10px;
    width: 182px;
}

.status th,
.status td {
    height: 27px;
    padding: 0 0 2px;
    font-size: 13px;
    line-height: 24px;
}

.status th {
    height: 26px;
}

.status th:first-child {
    width: 78px;
}

.matrix {
    bottom: 9px;
    width: 136px;
    border-spacing: 1px;
}

.matrix th,
.matrix td {
    height: 16px;
    padding: 0;
    font-size: 7px;
    font-weight: 500;
    line-height: 16px;
}

.matrix th {
    font-weight: 700;
}

.matrix th:nth-child(3) {
    width: 20px;
}

.matrix thead th:nth-child(2) {
    width: 26px;
}

.up {
    color: #4caf50;
}

.down {
    color: #f23645;
}

.mid {
    color: #ff9800;
}

.flat {
    color: #868993;
}

.add-order {
    position: absolute;
    right: 0;
    top: 180px;
    background: #0f0f0f;
    color: #fff;
}

.add-order svg {
    width: 21px;
    height: 21px;
}

/* axes */
.price-axis {
    position: relative;
    display: flex;
    flex-direction: column;
    padding: 5px 5px 0 1px;
}

.currency {
    appearance: none;
    height: 25px;
    margin-left: 3px;
    padding-left: 4px;
    border: 1px solid #ebebeb;
    border-radius: 4px;
    background: #fff;
    font-size: 11px;
}

.currency-arrow {
    position: absolute;
    right: 8px;
    top: 13px;
    width: 8px;
    height: 8px;
    stroke-width: 1.5;
    pointer-events: none;
}

.prices {
    position: relative;
    flex: 1;
    margin-top: 4px;
    overflow: hidden;
}

.price {
    position: absolute;
    left: 0;
    width: 66px;
    height: 17px;
    padding-left: 7px;
    border: 1px solid transparent;
    border-radius: 0 2px 2px 0;
    font-size: 12px;
    line-height: 14px;
}

.price.red,
.price.teal,
.price.gray,
.price.black {
    color: #fff;
    font-weight: 500;
    background: #f23645;
}

.price.teal {
    background: #089981;
}

.price.gray {
    background: #808080;
}

.price.black {
    height: 21px;
    line-height: 18px;
    background: #0f0f0f;
}

.price.red-line {
    background: #fff;
    border-color: #f23645;
    color: #f23645;
}

.price.teal-line {
    background: #fff;
    border-color: #089981;
    color: #089981;
}

.time-axis {
    position: relative;
    overflow: hidden;
    font-size: 12px;
    line-height: 28px;
}

.time-axis span {
    position: absolute;
    width: 40px;
    margin-left: -20px;
    text-align: center;
}

.axis-corner {
    display: flex;
    align-items: center;
    justify-content: center;
}

.axis-corner svg {
    width: 16px;
    height: 16px;
}

.cross-time {
    position: absolute;
    right: 109px;
    bottom: 4px;
    display: flex;
    justify-content: center;
    gap: 11px;
    width: 130px;
    height: 24px;
    border-radius: 0 0 2px 2px;
    background: #0f0f0f;
    color: #fff;
    font-size: 12px;
    font-weight: 500;
    line-height: 28px;
}

.favorites {
    position: absolute;
    left: 258px;
    bottom: 5px;
    display: flex;
    align-items: center;
    justify-content: space-between;
    width: 100px;
    height: 38px;
    padding: 0 5px 0 7px;
    border-radius: 6px;
    background: #fff;
    box-shadow: 0 2px 4px rgba(0, 0, 0, 0.25);
}

.favorites svg {
    width: 28px;
    height: 28px;
}

.favorites .grip {
    width: 10px;
    height: 14px;
    fill: #c8c8c8;
    stroke: none;
}

.range-bar {
    display: flex;
    align-items: center;
    height: 39px;
    padding: 0 10px 0 14px;
    border-top: 1px solid #ebebeb;
    font-size: 12px;
}

.range-bar button {
    margin-right: 13px;
}

.range-bar .sep {
    margin: 0 8px 0 -2px;
}

.goto svg {
    width: 28px;
    height: 28px;
}

.range-bar .clock {
    margin: 0 0 0 auto;
    font-size: 13px;
}

/* taskbar */
.taskbar {
    display: flex;
    align-items: center;
    flex: none;
    height: 48px;
    border-top: 1px solid #4b4238;
    background: linear-gradient(to right, #2e2517, #2c2518 13%, #331f15 27%, #2f2218 55%, #2f281b 64%, #331e15 77%, #2e251b 88%, #2c271d);
    color: #fff;
}

.weather {
    position: relative;
    width: 68px;
    margin-right: 212px;
}

.weather svg {
    width: 24px;
    stroke: none;
}

.weather span {
    position: absolute;
    left: 29px;
    top: -6px;
    width: 22px;
    height: 14px;
    border-radius: 7px;
    background: #353432;
    font-size: 10px;
    line-height: 14px;
}

.apps {
    display: flex;
}

.apps button {
    position: relative;
    width: 44px;
    height: 47px;
}

.apps svg {
    width: 24px;
    height: 24px;
    stroke: none;
}

.running::after,
.focused::after {
    content: "";
    position: absolute;
    bottom: 4px;
    left: 19px;
    width: 6px;
    height: 3px;
    border-radius: 2px;
    background: #9d9892;
}

.apps .focused {
    height: 40px;
    margin: 4px 2px 3px;
    width: 40px;
    border-radius: 4px;
    background: #443228;
}

.focused::after {
    left: 12px;
    bottom: 1px;
    width: 16px;
    background: #4cc2ff;
}

.who {
    position: absolute;
    top: 7px;
    right: 3px;
    width: 16px;
    height: 16px;
    border-radius: 50%;
    background: radial-gradient(circle at 50% 40%, #c9a0a0 12%, #0d1220 30%);
}

.who.green {
    top: 3px;
    background: radial-gradient(circle at 50% 35%, #4f7c32 20%, #76ad2f 40%);
}

.count {
    position: absolute;
    left: 17px;
    top: 7px;
    width: 27px;
    height: 15px;
    border-radius: 8px;
    background: #4cc2ff;
    color: #111;
    font-size: 10px;
    line-height: 15px;
}

.tray {
    display: flex;
    align-items: center;
    gap: 8px;
    margin-left: auto;
    padding-right: 19px;
    font-size: 11px;
    line-height: 16px;
}

.tray svg {
    width: 16px;
    height: 16px;
}

.tray .battery svg {
    width: 20px;
}

.tray button:first-child {
    margin-right: 8px;
}

.lang {
    width: 44px;
}

.date {
    margin-left: 12px;
    text-align: right;
}
```

FILE: chart.js
```js
// top left corner of the plot in the coordinates used below
const LEFT = 56;
const TOP = 129;

const UP = '#089981';
const DOWN = '#f23645';
const BLUE = '#2962ff';
const GREEN = '#4caf50';

// x, high, low, body top, body bottom, 1 = up
const candles = [
    [56, 386, 449, 392, 441, 0], [64, 412, 485, 440, 465, 0], [71, 407, 468, 442, 466, 1], [79, 423, 469, 433, 443, 1],
    [87, 417, 450, 429, 434, 1], [94, 429, 480, 429, 454, 0], [102, 442, 473, 453, 454, 0], [110, 439, 473, 450, 454, 1],
    [117, 383, 451, 402, 451, 1], [125, 394, 454, 402, 440, 0], [133, 385, 449, 397, 440, 1], [141, 383, 407, 397, 403, 0],
    [148, 360, 409, 397, 403, 1], [156, 373, 413, 397, 406, 0], [164, 400, 466, 405, 456, 0], [171, 390, 474, 402, 456, 1],
    [179, 390, 425, 402, 416, 0], [187, 393, 430, 416, 418, 0], [194, 398, 440, 417, 439, 0], [202, 391, 464, 411, 439, 1],
    [210, 368, 423, 384, 412, 1], [218, 366, 438, 368, 386, 1], [225, 349, 417, 368, 372, 0], [233, 360, 415, 371, 389, 0],
    [241, 323, 395, 352, 389, 1], [248, 294, 355, 349, 353, 1], [256, 323, 391, 336, 350, 1], [264, 324, 376, 337, 364, 0],
    [271, 354, 382, 363, 367, 0], [279, 366, 417, 366, 408, 0], [287, 388, 424, 407, 413, 0], [295, 400, 447, 408, 414, 1],
    [302, 408, 560, 408, 532, 0], [310, 531, 605, 531, 575, 0], [318, 542, 582, 552, 576, 1], [325, 515, 564, 537, 553, 1],
    [333, 528, 586, 536, 570, 0], [341, 541, 585, 562, 569, 1], [348, 547, 580, 562, 575, 0], [356, 548, 578, 554, 575, 1],
    [364, 554, 605, 555, 605, 0], [372, 533, 605, 540, 605, 1], [379, 527, 548, 537, 542, 1], [387, 523, 572, 536, 556, 0],
    [395, 542, 582, 555, 577, 0], [402, 554, 592, 576, 582, 0], [410, 578, 605, 581, 600, 0], [418, 481, 605, 530, 605, 1],
    [425, 475, 578, 508, 530, 1], [433, 462, 509, 504, 509, 1], [441, 492, 598, 504, 585, 0], [449, 510, 558, 520, 555, 1],
    [456, 498, 538, 520, 528, 0], [464, 478, 536, 502, 528, 1], [472, 481, 522, 489, 503, 1], [479, 480, 550, 489, 542, 0],
    [487, 517, 545, 524, 542, 1], [495, 498, 533, 521, 525, 1], [502, 505, 533, 507, 522, 1], [510, 490, 512, 507, 511, 0],
    [518, 508, 570, 510, 547, 0], [526, 530, 558, 546, 547, 0], [533, 545, 590, 547, 583, 0], [541, 523, 586, 539, 583, 1],
    [549, 502, 550, 502, 540, 1], [556, 462, 511, 466, 503, 1], [564, 462, 487, 466, 475, 0], [572, 408, 473, 420, 473, 1],
    [579, 417, 447, 420, 435, 0], [587, 423, 450, 434, 438, 0], [595, 406, 441, 430, 437, 1], [603, 419, 461, 430, 438, 0],
    [610, 416, 441, 421, 437, 1], [618, 389, 433, 419, 422, 1], [626, 411, 428, 414, 420, 1], [633, 408, 428, 414, 426, 0],
    [641, 415, 431, 424, 425, 1], [649, 401, 425, 403, 424, 1], [656, 379, 406, 391, 404, 1], [664, 385, 401, 390, 397, 0],
    [672, 387, 405, 396, 399, 0], [680, 307, 400, 334, 399, 1], [687, 326, 369, 334, 367, 0], [695, 313, 374, 318, 368, 1],
    [703, 318, 359, 319, 341, 0], [710, 326, 349, 337, 341, 1], [718, 335, 367, 337, 353, 0], [726, 342, 385, 352, 365, 0],
    [733, 358, 378, 365, 373, 0], [741, 361, 388, 372, 385, 0], [749, 370, 400, 384, 386, 0], [757, 375, 400, 385, 388, 0],
    [764, 386, 434, 387, 425, 0], [772, 407, 439, 422, 425, 1], [780, 411, 453, 422, 453, 0], [787, 434, 462, 436, 453, 1],
    [795, 418, 439, 423, 437, 1], [803, 412, 435, 422, 429, 0], [810, 427, 443, 428, 439, 0], [818, 427, 452, 438, 448, 0],
    [826, 431, 453, 439, 448, 1], [834, 434, 486, 439, 477, 0], [841, 467, 491, 476, 487, 0], [849, 475, 507, 479, 486, 0],
    [857, 472, 499, 477, 486, 1], [864, 458, 482, 459, 478, 1], [872, 446, 476, 459, 465, 0], [880, 445, 485, 451, 465, 1],
    [887, 423, 473, 437, 451, 1], [895, 414, 452, 425, 438, 1], [903, 392, 440, 413, 440, 1], [911, 396, 453, 413, 440, 0],
    [918, 402, 469, 439, 458, 0], [926, 432, 482, 439, 458, 1], [934, 403, 461, 432, 440, 1], [941, 340, 434, 350, 433, 1],
    [949, 322, 373, 351, 364, 0], [957, 338, 374, 339, 365, 1], [964, 195, 340, 209, 340, 1], [972, 140, 231, 150, 210, 1],
    [980, 129, 176, 129, 150, 1], [988, 129, 168, 129, 160, 0], [995, 132, 177, 150, 168, 0], [1003, 150, 184, 150, 168, 1],
    [1011, 140, 160, 145, 160, 1], [1018, 150, 220, 160, 204, 0], [1026, 204, 217, 204, 217, 0], [1034, 173, 207, 204, 206, 0],
    [1041, 205, 273, 205, 254, 0], [1049, 235, 273, 253, 265, 0], [1057, 242, 275, 264, 275, 0], [1065, 239, 275, 240, 275, 1],
    [1072, 204, 241, 209, 241, 1], [1080, 150, 211, 160, 211, 1], [1088, 150, 191, 160, 189, 0], [1095, 182, 216, 189, 206, 0],
    [1103, 170, 208, 171, 206, 1], [1111, 165, 234, 171, 208, 0], [1118, 172, 227, 195, 208, 1], [1126, 177, 208, 195, 208, 0],
    [1134, 206, 223, 207, 218, 0], [1141, 200, 240, 217, 221, 0], [1149, 219, 262, 220, 255, 0], [1157, 198, 290, 201, 244, 0]
];

const rays = [
    [UP, '56,229 241,328'],
    [UP, '248,294 425,436'],
    [UP, '433,462 614,605'],
    [UP, '680,307 972,464'],
    [UP, '1051,129 1159,206'],
    [DOWN, '64,486 410,218'],
    [DOWN, '487,605 841,328'],
    [DOWN, '849,508 1159,308'],
    [BLUE, '56,465 64,486 148,360 171,474 248,294 418,665 433,462 533,591 680,307 849,508 980,77 1159,374']
];

const gridX = [94, 187, 279, 372, 449, 526, 618, 710, 803, 895, 988, 1080, 1157];
const gridY = [179, 236, 294, 351, 408, 465, 522, 579];

const times = [
    [95, '15:00'], [187, '18:00'], [279, '21:00'], [448, '03:30'], [525, '06:00'], [618, '09:00'],
    [711, '12:00'], [803, '15:00'], [895, '18:00'], [988, '21:00'], [1157, '30']
];

// offset from the top of the scale, text, style
const prices = [
    [8, '4,520.000', ''], [179, '4,460.000', ''], [236, '4,440.000', ''], [350, '4,400.000', ''], [407, '4,380.000', ''],
    [-8, '4,525.394', 'gray'], [16, '4,516.527', 'red'], [33, '4,511.248', 'teal-line'], [55, '4,503.720', 'red'],
    [72, '4,497.845', 'red-line'], [114, '4,483.031', 'teal'], [130, '4,479.091', 'gray'], [146, '4,471.054', 'black'],
    [306, '4,421.458', 'gray'], [289, '4,421.458', 'teal'], [323, '4,413.084', 'teal'], [340, '4,405.696', 'red']
];

function rect(x1, y1, x2, y2, fill, opacity = 1) {
    return `<rect x="${x1}" y="${y1}" width="${x2 - x1}" height="${y2 - y1}" fill="${fill}" fill-opacity="${opacity}"/>`;
}

function marker(x, y, color, pointsDown) {
    const tail = pointsDown
        ? `M${x - 3} ${y + 19}l3.500 3 3.500-3z`
        : `M${x - 3} ${y}l3.500-3 3.500 3z`;
    return `<rect x="${x - 6}" y="${y}" width="13" height="20" rx="2" fill="${color}"/>` +
        `<path d="${tail}" fill="${color}"/><text class="mark" x="${x}" y="${y + 13}">B</text>`;
}

let svg = `<g transform="translate(${-LEFT} ${-TOP})">`;

svg += '<g class="grid">';
gridX.forEach((x) => { svg += `<path d="M${x}.5 129V605"/>`; });
gridY.forEach((y) => { svg += `<path d="M56 ${y}.5H1159"/>`; });
svg += '</g>';

// long position box
svg += rect(449, 285, 611, 461, UP, 0.2) + rect(449, 285, 611, 286, UP, 0.3);
svg += rect(572, 421, 611, 461, UP, 0.2);
svg += rect(449, 461, 611, 506, DOWN, 0.2);
svg += rect(448, 460, 611, 461, '#787b86');
svg += '<path d="M575 456L608 420" stroke="#8c8c8c" stroke-dasharray="5 5"/>';

svg += '<g class="candles">';
candles.forEach(([x, high, low, top, bottom, up]) => {
    const color = up ? UP : DOWN;
    svg += rect(x, high, x + 1, low, color) + rect(x - 2, top, x + 3, bottom, color);
});
svg += '</g>';

rays.forEach(([color, points]) => {
    svg += `<polyline class="ray" points="${points}" stroke="${color}" transform="translate(.5 0)"/>`;
});

// order block
svg += rect(433, 462, 1159, 528, GREEN, 0.3);
svg += `<path d="M1159 462.500H433.500V528.500H1159" fill="none" stroke="${GREEN}"/>`;

svg += rect(148, 358, 248, 360, GREEN) + rect(171, 473, 418, 475, DOWN) + rect(433, 461, 680, 463, GREEN);
svg += marker(179, 371, DOWN, true) + marker(533, 525, DOWN, true);
svg += marker(549, 549, UP, false) + marker(903, 427, UP, false);
svg += `<text x="156" y="348" fill="${GREEN}">MSB</text>`;
svg += `<text x="479" y="451" fill="${GREEN}">MSB</text>`;
svg += `<text x="302" y="493" fill="${DOWN}">MSB</text>`;
svg += '</g>';
document.getElementById('plot').innerHTML = svg;

document.getElementById('cross').innerHTML =
    '<line x1="0" y1="190.500" x2="1082" y2="190.500"/><line x1="1001.500" y1="0" x2="1001.500" y2="476"/>';

document.getElementById('prices').innerHTML = prices
    .map(([y, text, style]) => `<span class="price ${style}" style="top: ${y}px">${text}</span>`)
    .join('');

document.getElementById('times').innerHTML = times
    .map(([x, text]) => `<span style="left: ${x - LEFT}px">${text}</span>`)
    .join('');
```
